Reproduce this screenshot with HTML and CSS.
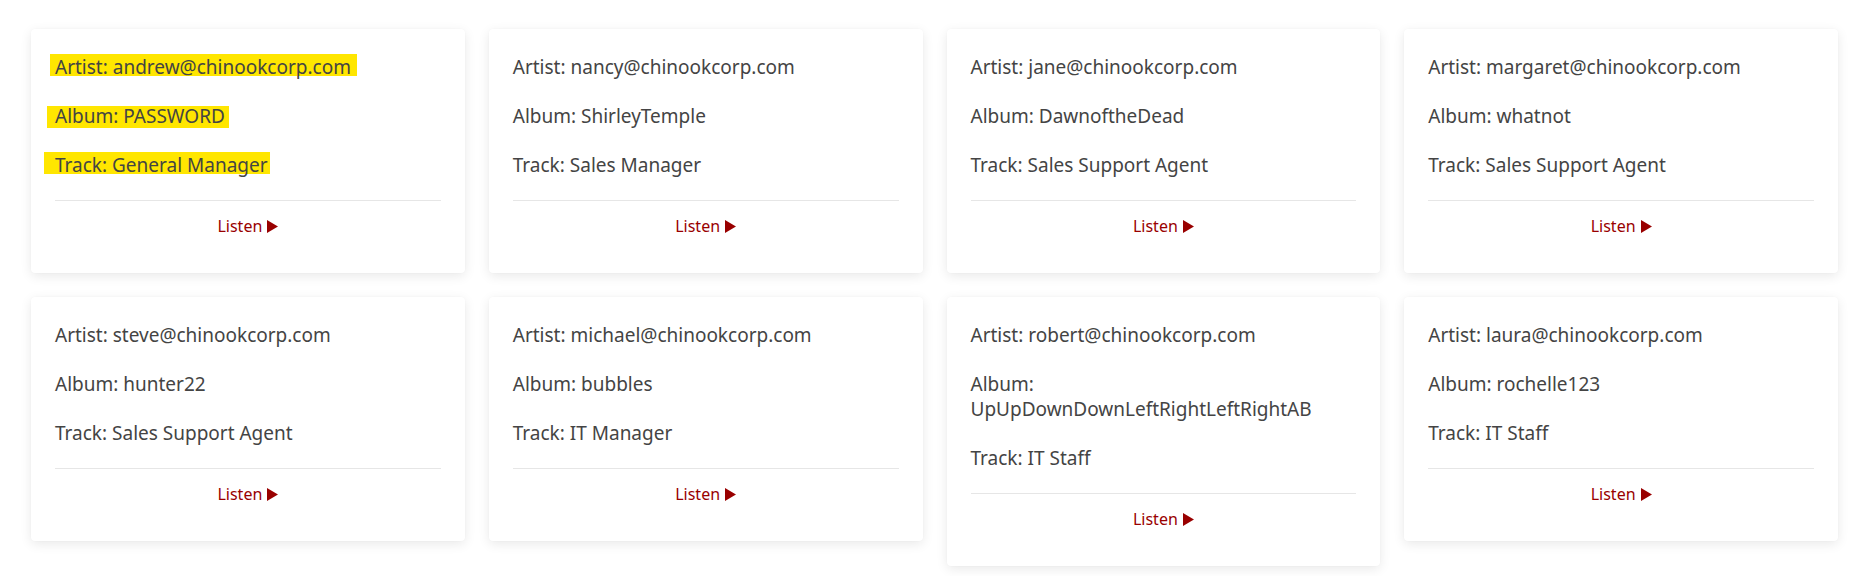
FILE: index.html
```html
<!DOCTYPE html>
<html lang="en">
<head>
<meta charset="utf-8">
<title>Tracks</title>
<link rel="stylesheet" href="styles.css">
</head>
<body>
<main class="grid">
  <article class="card">
    <p class="line"><span class="hl hl-1">Artist: andrew@chinookcorp.com</span></p>
    <p class="line"><span class="hl hl-2">Album: PASSWORD</span></p>
    <p class="line"><span class="hl hl-3">Track: General Manager</span></p>
    <div class="foot"><a class="listen" href="#">Listen <svg class="play" viewBox="0 0 11 13" width="11" height="13"><polygon points="0,0 11,6.5 0,13"/></svg></a></div>
  </article>
  <article class="card">
    <p class="line">Artist: nancy@chinookcorp.com</p>
    <p class="line">Album: ShirleyTemple</p>
    <p class="line">Track: Sales Manager</p>
    <div class="foot"><a class="listen" href="#">Listen <svg class="play" viewBox="0 0 11 13" width="11" height="13"><polygon points="0,0 11,6.5 0,13"/></svg></a></div>
  </article>
  <article class="card">
    <p class="line">Artist: jane@chinookcorp.com</p>
    <p class="line">Album: DawnoftheDead</p>
    <p class="line">Track: Sales Support Agent</p>
    <div class="foot"><a class="listen" href="#">Listen <svg class="play" viewBox="0 0 11 13" width="11" height="13"><polygon points="0,0 11,6.5 0,13"/></svg></a></div>
  </article>
  <article class="card">
    <p class="line">Artist: margaret@chinookcorp.com</p>
    <p class="line">Album: whatnot</p>
    <p class="line">Track: Sales Support Agent</p>
    <div class="foot"><a class="listen" href="#">Listen <svg class="play" viewBox="0 0 11 13" width="11" height="13"><polygon points="0,0 11,6.5 0,13"/></svg></a></div>
  </article>
  <article class="card">
    <p class="line">Artist: steve@chinookcorp.com</p>
    <p class="line">Album: hunter22</p>
    <p class="line">Track: Sales Support Agent</p>
    <div class="foot"><a class="listen" href="#">Listen <svg class="play" viewBox="0 0 11 13" width="11" height="13"><polygon points="0,0 11,6.5 0,13"/></svg></a></div>
  </article>
  <article class="card">
    <p class="line">Artist: michael@chinookcorp.com</p>
    <p class="line">Album: bubbles</p>
    <p class="line">Track: IT Manager</p>
    <div class="foot"><a class="listen" href="#">Listen <svg class="play" viewBox="0 0 11 13" width="11" height="13"><polygon points="0,0 11,6.5 0,13"/></svg></a></div>
  </article>
  <article class="card">
    <p class="line">Artist: robert@chinookcorp.com</p>
    <p class="line">Album: UpUpDownDownLeftRightLeftRightAB</p>
    <p class="line">Track: IT Staff</p>
    <div class="foot"><a class="listen" href="#">Listen <svg class="play" viewBox="0 0 11 13" width="11" height="13"><polygon points="0,0 11,6.5 0,13"/></svg></a></div>
  </article>
  <article class="card">
    <p class="line">Artist: laura@chinookcorp.com</p>
    <p class="line">Album: rochelle123</p>
    <p class="line">Track: IT Staff</p>
    <div class="foot"><a class="listen" href="#">Listen <svg class="play" viewBox="0 0 11 13" width="11" height="13"><polygon points="0,0 11,6.5 0,13"/></svg></a></div>
  </article>
</main>
</body>
</html>
```

FILE: styles.css
```css
* { box-sizing: border-box; }

html, body {
  margin: 0;
  background: #ffffff;
}

body {
  font-family: "Noto Sans", "Open Sans", sans-serif;
  color: #444444;
}

.grid {
  display: grid;
  grid-template-columns: repeat(4, 1fr);
  gap: 24px;
  align-items: start;
  padding: 29px 38px 24px 31px;
}

.card {
  background: #ffffff;
  border-radius: 4px;
  box-shadow: 0 3px 12px rgba(0, 0, 0, 0.09), 0 0 2px rgba(0, 0, 0, 0.03);
  padding: 26px 24px 24px 24px;
}

.line {
  margin: 0 0 24px 0;
  font-size: 19px;
  line-height: 25px;
  overflow-wrap: anywhere;
}

.hl {
  display: inline-block;
  position: relative;
  isolation: isolate;
}

.hl::before {
  content: "";
  position: absolute;
  z-index: -1;
  background: #ffe600;
  height: 22px;
}

.hl-1::before { left: -5px; right: -6px; top: -1px; }
.hl-2::before { left: -8px; right: -4px; top: 2px; }
.hl-3::before { left: -11px; right: -2px; top: -1px; }

.foot {
  margin-top: -2px;
  border-top: 1px solid #e6e6e6;
  padding: 15px 0 12px 0;
  text-align: center;
  line-height: 21px;
  height: 49px;
}

.listen {
  font-size: 16px;
  line-height: 21px;
  color: #990000;
  text-decoration: none;
  display: inline-flex;
  align-items: center;
  gap: 5px;
  vertical-align: top;
}

.play {
  fill: #990000;
  display: block;
}
```
